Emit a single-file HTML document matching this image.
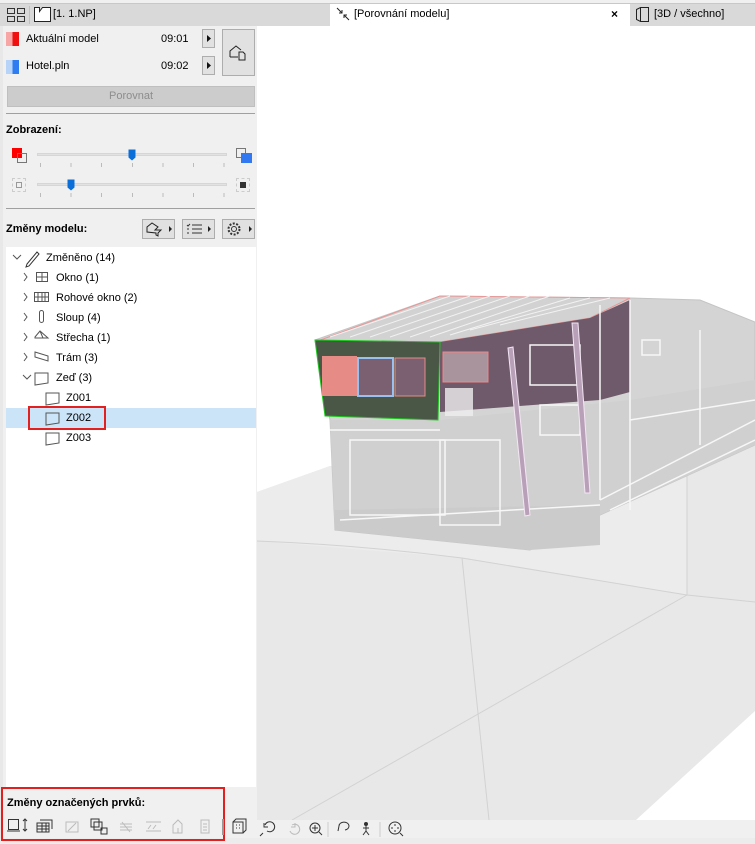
<!DOCTYPE html>
<html><head><meta charset="utf-8"><style>
*{box-sizing:border-box;margin:0;padding:0}
body{width:755px;height:844px;overflow:hidden;background:#f0f0f0;font-family:"Liberation Sans",sans-serif;font-size:11px;color:#000;position:relative}
.a{position:absolute}
.btn{position:absolute;border:1px solid #adadad;background:#e1e1e1}
.tree div{position:absolute;height:20px;line-height:20px;font-size:11px}
</style></head><body>
<!-- top tabs -->
<div class="a" style="left:0;top:0;width:755px;height:3px;background:#f0f0f0"></div>
<div class="a" style="left:0;top:3px;width:755px;height:23px;background:#d9d9d9;border-top:1px solid #c8c8c8"></div>
<svg class="a" style="left:6px;top:7px" width="22" height="16"><g fill="none" stroke="#333" stroke-width="1"><rect x="1.5" y="1.5" width="7" height="5"/><rect x="11.5" y="1.5" width="7" height="5"/><rect x="1.5" y="9.5" width="7" height="5"/><rect x="11.5" y="9.5" width="7" height="5"/></g></svg>
<div class="a" style="left:29px;top:6px;width:1px;height:18px;background:#c0c0c0"></div>
<svg class="a" style="left:33px;top:5px" width="20" height="18"><path d="M1.5 16.5V2.5h5v4l3-4h8v14z" fill="#fff" stroke="#222"/></svg>
<div class="a" style="left:53px;top:8px;font-size:11px">[1. 1.NP]</div>
<div class="a" style="left:330px;top:4px;width:300px;height:22px;background:#fff"></div>
<svg class="a" style="left:336px;top:7px" width="14" height="14"><path d="M1 1l5 5M6 3v3H3M13 13l-5-5M8 11V8h3" stroke="#222" fill="none"/></svg>
<div class="a" style="left:354px;top:8px">[Porovnání modelu]</div>
<div class="a" style="left:611px;top:7px;font-size:12px;font-weight:bold">×</div>
<svg class="a" style="left:634px;top:6px" width="18" height="18"><path d="M2.5 3.5l4-2h8v14h-8l-4-2z M6.5 1.5v14" fill="none" stroke="#222"/></svg>
<div class="a" style="left:654px;top:8px">[3D / všechno]</div>

<!-- left panel -->
<div class="a" style="left:0;top:26px;width:3px;height:818px;background:#e8e8e8"></div>
<div class="a" style="left:6px;top:32px;width:13px;height:14px;background:linear-gradient(90deg,#f7a5a5 50%,#f01010 50%)"></div>
<div class="a" style="left:26px;top:33px">Aktuální model</div>
<div class="a" style="left:161px;top:33px">09:01</div>
<div class="btn" style="left:202px;top:29px;width:13px;height:19px"></div>
<svg class="a" style="left:205px;top:34px" width="8" height="9"><path d="M2 1l4 3.5L2 8z" fill="#111"/></svg>
<div class="a" style="left:6px;top:60px;width:13px;height:14px;background:linear-gradient(90deg,#b7d3f7 50%,#2f7cf0 50%)"></div>
<div class="a" style="left:26px;top:60px">Hotel.pln</div>
<div class="a" style="left:161px;top:60px">09:02</div>
<div class="btn" style="left:202px;top:56px;width:13px;height:19px"></div>
<svg class="a" style="left:205px;top:61px" width="8" height="9"><path d="M2 1l4 3.5L2 8z" fill="#111"/></svg>
<div class="btn" style="left:222px;top:29px;width:33px;height:47px"></div>
<svg class="a" style="left:228px;top:43px" width="22" height="20"><path d="M2 14V8l6-5 5 4M2 14h8 M11 9h4l2 2v6h-6z" fill="none" stroke="#222"/></svg>
<div class="btn" style="left:7px;top:86px;width:248px;height:21px;background:#cccccc;border-color:#bfbfbf;text-align:center;line-height:19px;color:#8d8d8d;font-size:11px">Porovnat</div>
<div class="a" style="left:6px;top:113px;width:249px;height:1px;background:#a0a0a0"></div>
<div class="a" style="left:6px;top:124px;font-weight:bold">Zobrazení:</div>
<div class="a" style="left:12px;top:148px;width:10px;height:10px;background:#f00"></div>
<div class="a" style="left:17px;top:153px;width:10px;height:10px;border:1px solid #777"></div>
<div class="a" style="left:37px;top:153px;width:190px;height:3px;background:#e2e2e2;border:1px solid #d6d6d6"></div>
<svg class="a" style="left:128px;top:149px" width="9" height="12"><path d="M0.5 0.5h7v8l-3.5 3-3.5-3z" fill="#0a6fd8"/></svg>
<div class="a" style="left:236px;top:148px;width:10px;height:10px;border:1px solid #777"></div>
<div class="a" style="left:241px;top:153px;width:11px;height:10px;background:#3278f0"></div>
<div class="a" style="left:40px;top:163px;width:186px;height:4px;background:repeating-linear-gradient(90deg,#bbb 0 1px,transparent 1px 30.6px)"></div>
<div class="a" style="left:12px;top:178px;width:14px;height:14px;border:1px dashed #ccc"></div>
<div class="a" style="left:16px;top:182px;width:6px;height:6px;border:1px solid #999"></div>
<div class="a" style="left:37px;top:183px;width:190px;height:3px;background:#e2e2e2;border:1px solid #d6d6d6"></div>
<svg class="a" style="left:67px;top:179px" width="9" height="12"><path d="M0.5 0.5h7v8l-3.5 3-3.5-3z" fill="#0a6fd8"/></svg>
<div class="a" style="left:236px;top:178px;width:14px;height:14px;border:1px dashed #ccc"></div>
<div class="a" style="left:240px;top:182px;width:6px;height:6px;background:#333"></div>
<div class="a" style="left:40px;top:193px;width:186px;height:4px;background:repeating-linear-gradient(90deg,#bbb 0 1px,transparent 1px 30.6px)"></div>
<div class="a" style="left:6px;top:208px;width:249px;height:1px;background:#a0a0a0"></div>
<div class="a" style="left:6px;top:223px;font-weight:bold">Změny modelu:</div>
<div class="btn" style="left:142px;top:219px;width:33px;height:20px"></div>
<svg class="a" style="left:144px;top:220px" width="30" height="18"><path d="M3 12V7l5-4 6 4-3 3h6l-3 3v3l-2-1v-2z" fill="none" stroke="#222"/><path d="M25 6l3 3-3 3z" fill="#222"/></svg>
<div class="btn" style="left:182px;top:219px;width:33px;height:20px"></div>
<svg class="a" style="left:184px;top:220px" width="30" height="18"><path d="M3 5l1 1 2-2 M8 5h10 M3 9h2 M8 9h10 M3 13h2 M8 13h10" fill="none" stroke="#333"/><path d="M24 6l3 3-3 3z" fill="#222"/></svg>
<div class="btn" style="left:222px;top:219px;width:33px;height:20px"></div>
<svg class="a" style="left:224px;top:220px" width="30" height="18"><circle cx="10" cy="9" r="5.5" fill="none" stroke="#333" stroke-dasharray="2 1.5" stroke-width="2"/><circle cx="10" cy="9" r="2.5" fill="none" stroke="#333"/><path d="M25 6l3 3-3 3z" fill="#222"/></svg>

<!-- tree -->
<div class="a" style="left:6px;top:247px;width:250px;height:540px;background:#fff"></div>
<div class="a" style="left:6px;top:408px;width:250px;height:20px;background:#cce4f7"></div>
<div class="a" style="left:28px;top:406px;width:78px;height:24px;border:2px solid #e32020"></div>
<svg class="a" style="left:6px;top:247px" width="100" height="200" fill="none" stroke="#555">
<path d="M7 8l4 4 4-4"/><path d="M21 17L31 5l2 2-10 12-3 1z" stroke="#333"/>
<path d="M18 26l3 4-3 4M18 46l3 4-3 4M18 66l3 4-3 4M18 86l3 4-3 4M18 106l3 4-3 4"/>
<path d="M17 128l4 4 4-4"/>
<rect x="30.5" y="25.5" width="11" height="9"/><path d="M36 25v10M30 30h12"/>
<rect x="28.5" y="45.5" width="14" height="9"/><path d="M32 45v10M36 45v10M39 45v10M28 50h15"/>
<rect x="33.5" y="63.5" width="4" height="12" rx="2"/>
<path d="M29 90l5-6 8 7H29zM34 84l3 7"/>
<path d="M29 105l13 4v5l-13-4z"/>
<path d="M29 126h13v10l-13 2z"/>
<path d="M40 146h13v10l-13 2zM40 166h13v10l-13 2zM40 186h13v10l-13 2z"/>
</svg>
<div class="tree">
<div style="left:46px;top:248px">Změněno (14)</div>
<div style="left:56px;top:268px">Okno (1)</div>
<div style="left:56px;top:288px">Rohové okno (2)</div>
<div style="left:56px;top:308px">Sloup (4)</div>
<div style="left:56px;top:328px">Střecha (1)</div>
<div style="left:56px;top:348px">Trám (3)</div>
<div style="left:56px;top:368px">Zeď (3)</div>
<div style="left:66px;top:388px">Z001</div>
<div style="left:66px;top:408px">Z002</div>
<div style="left:66px;top:428px">Z003</div>
</div>

<!-- viewport -->
<div class="a" style="left:257px;top:26px;width:498px;height:794px;background:#fff;overflow:hidden">
<svg width="498" height="794" viewBox="257 26 498 794">
<polygon points="257,492 330,466 755,440 755,711 636,820 257,820" fill="#e8e8e8"/>
<polygon points="257,492 330,466 687,470 687,595 462,558 257,541" fill="#ececec"/>
<path d="M257,541Q360,545 462,558L489,820M462,558L687,595V470M687,595L755,602M687,595L292,820" stroke="#d2d2d2" fill="none"/>
<polygon points="315,340 440,296 630,298 700,300 755,322 755,445 600,515 530,550 335,530 330,420" fill="#d4d4d4" stroke="#c4c4c4"/>
<polygon points="330,420 440,420 630,400 755,380 755,445 600,515 530,550 335,530" fill="#d0d0d0"/>
<polygon points="335,510 600,505 600,545 530,550 335,530" fill="#cbcbcb"/>
<polygon points="315,342 440,296 630,298 590,318 440,342" fill="#d2d2d2" stroke="#e89898"/>
<g stroke="#f2f2f2" stroke-width="1"><path d="M330,337L450,296M350,337L470,296M370,337L490,296M390,337L510,296M410,337L530,296M430,337L550,296M450,335L570,298M470,330L590,298M500,325L610,298"/></g>
<polygon points="440,342 590,318 630,300 630,392 600,400 440,412" fill="#6e5a6a"/>
<polygon points="315,340 440,342 438,420 325,416" fill="#4a5747" stroke="#1ec81e"/>
<rect x="322" y="356" width="35" height="40" fill="#e68b86"/>
<rect x="358" y="358" width="35" height="38" fill="#7a6070" stroke="#9ac0f0" stroke-width="2"/>
<rect x="395" y="358" width="30" height="38" fill="#7a6070" stroke="#e68b86"/>
<rect x="443" y="352" width="45" height="30" fill="#a9939c" stroke="#e88"/>
<rect x="445" y="388" width="28" height="28" fill="#eee" opacity=".8"/>
<g stroke="#f7f7f7" fill="none" stroke-width="1.5">
<rect x="350" y="440" width="95" height="75"/><rect x="440" y="440" width="60" height="85"/>
<rect x="530" y="345" width="50" height="40"/><rect x="540" y="405" width="40" height="30"/>
<rect x="642" y="340" width="18" height="15"/><path d="M600,305V500M630,300V510M700,330V445M330,430H440M630,420L755,400M600,500L755,420M610,510L755,440M340,520L600,505"/>
</g>
<g fill="#b8a0b8" stroke="#f4e6f4"><polygon points="508,348 513,347 530,515 525,516"/><polygon points="572,323 578,323 590,493 585,493"/></g>
</svg>
</div>

<!-- bottom toolbar -->
<div class="a" style="left:225px;top:820px;width:530px;height:18px;background:#f0f0f0"></div>
<div class="a" style="left:0;top:838px;width:755px;height:6px;background:#ececec"></div>

<!-- bottom left -->
<div class="a" style="left:1px;top:787px;width:224px;height:54px;border:2px solid #e32020"></div>
<div class="a" style="left:7px;top:797px;font-weight:bold">Změny označených prvků:</div>
<svg class="a" style="left:5px;top:816px" width="250" height="22" fill="none" stroke="#333">
<rect x="3.5" y="3.5" width="10" height="10"/><path d="M2 15h13M20 3v12M18 5l2-2 2 2M18 13l2 2 2-2"/>
<path d="M32 7h12v9H32zM35 4h12v9M32 10h12M32 13h12M37 7v9M41 7v9"/>
<path d="M61 6h12v10H61zM63 15l8-8" stroke="#bbb"/>
<path d="M86 3h8v8h-8zM89 6h8v8h-8zM96 12v6h6v-6z"/>
<path d="M115 8h12M115 11h12M115 14h12M117 6l8 10" stroke="#bbb"/>
<path d="M141 6h15M141 15h15M143 13l3-4M148 13l3-4" stroke="#bbb"/>
<path d="M168 17V9l5-5 4 4v9zM173 12v5" stroke="#bbb"/>
<path d="M196 4h8v13h-8zM198 8h4M198 11h4M198 14h4" stroke="#bbb"/>
<path d="M218 3v16" stroke="#999" stroke-width="2"/>
<path d="M228 6h10v11H228zM228 6l3-3h10v11l-3 3M231 9h1M234 9h1M231 12h1M234 12h1" />
</svg>
<svg class="a" style="left:255px;top:819px" width="160" height="20" fill="none" stroke="#333">
<path d="M12 12a5 5 0 1 0-2-6M9 4v4h4M8 14l-3 3"/>
<path d="M37 6a5 5 0 1 1-2 6M40 4v4h-4" stroke="#bbb"/>
<circle cx="60" cy="9" r="5"/><path d="M64 13l3 3M57 9h6M60 6v6"/>
<path d="M73 3v15" stroke="#ccc"/>
<path d="M84 7a5 4 0 1 1 6 4M84 7l-1 5"/>
<circle cx="111" cy="5" r="1.5" fill="#333"/><path d="M111 7v5l-3 4M111 12l3 4M108 9h6"/>
<path d="M125 3v15" stroke="#ccc"/>
<circle cx="140" cy="9" r="6"/><path d="M145 14l3 3M140 5v2M140 11v2M136 9h2M142 9h2"/>
</svg>
</body></html>
